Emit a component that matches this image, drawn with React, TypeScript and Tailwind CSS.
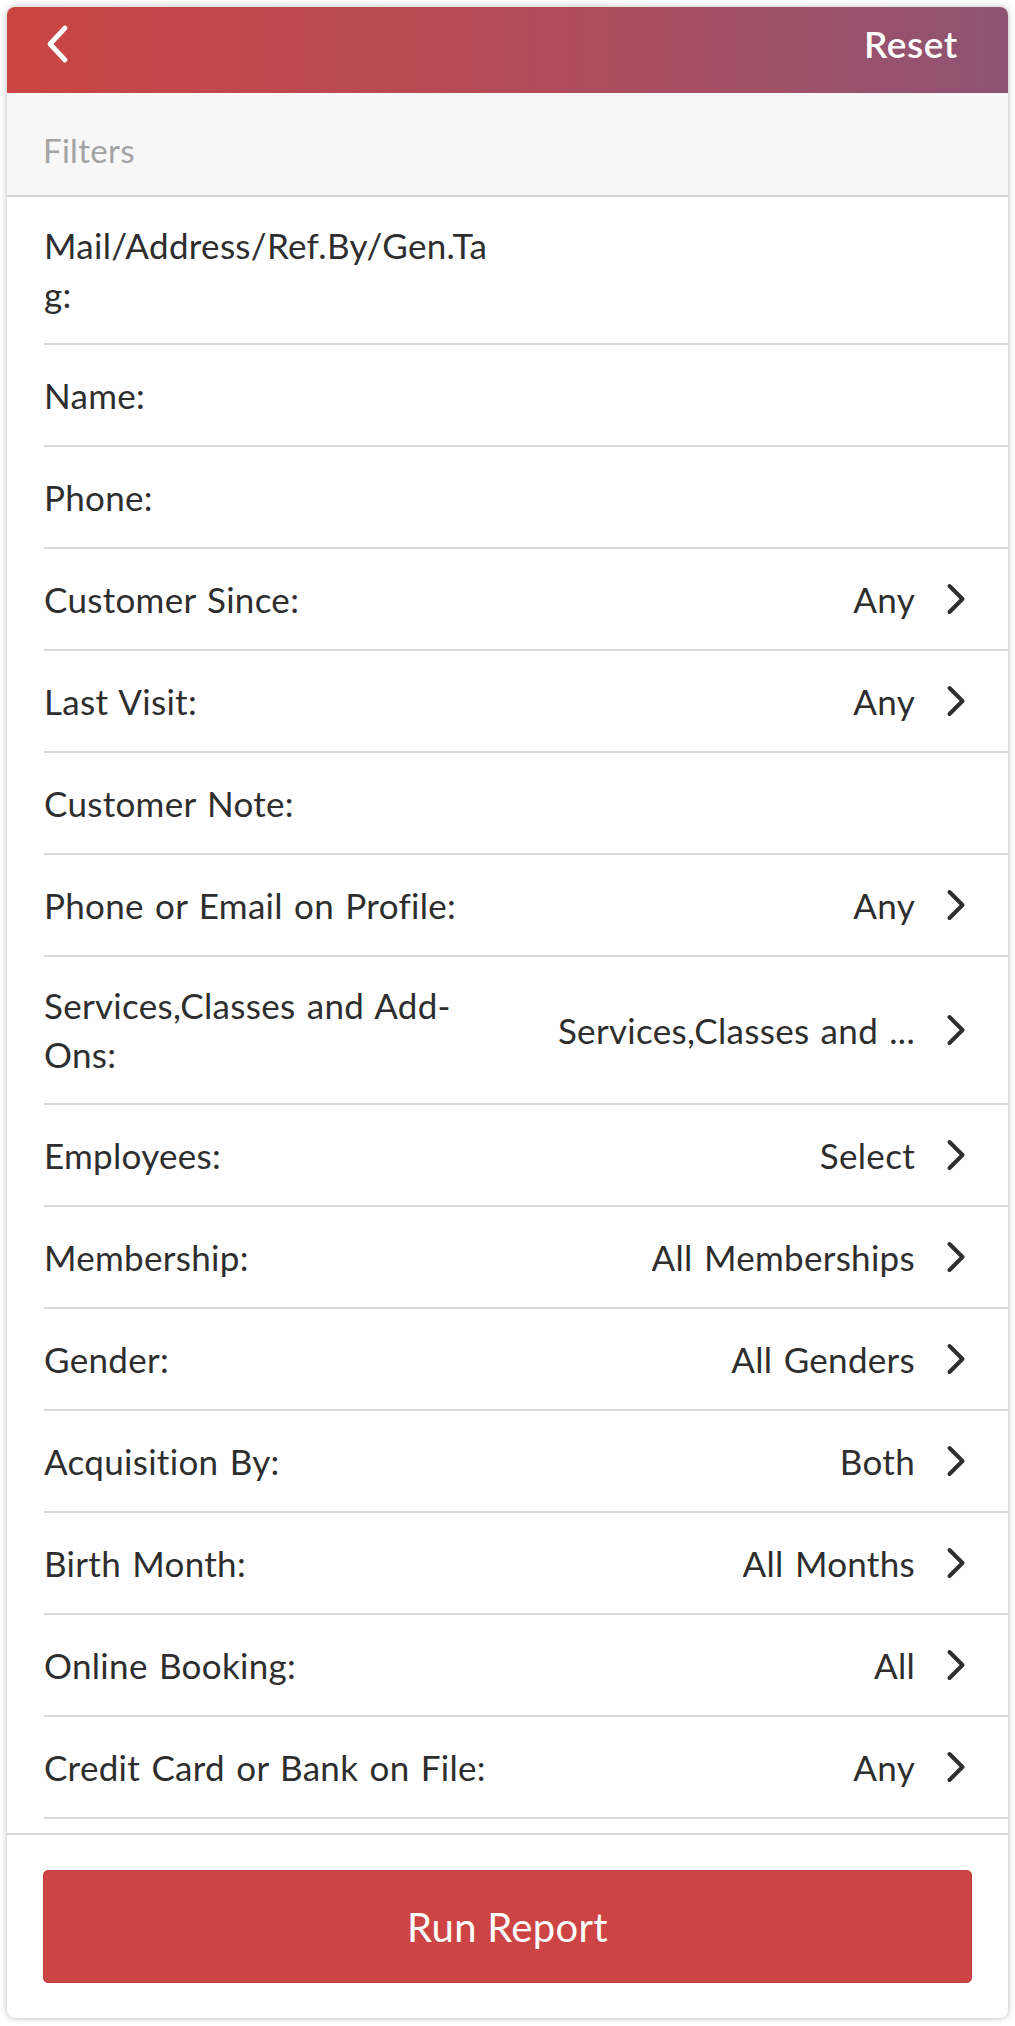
import { Fragment } from "react";

type FilterRow = {
  label: string;
  value?: string;
  tall?: boolean;
};

const ROWS: FilterRow[] = [
  { label: "Mail/Address/Ref.By/Gen.Ta\ng:", tall: true },
  { label: "Name:" },
  { label: "Phone:" },
  { label: "Customer Since:", value: "Any" },
  { label: "Last Visit:", value: "Any" },
  { label: "Customer Note:" },
  { label: "Phone or Email on Profile:", value: "Any" },
  { label: "Services,Classes and Add-\nOns:", value: "Services,Classes and ...", tall: true },
  { label: "Employees:", value: "Select" },
  { label: "Membership:", value: "All Memberships" },
  { label: "Gender:", value: "All Genders" },
  { label: "Acquisition By:", value: "Both" },
  { label: "Birth Month:", value: "All Months" },
  { label: "Online Booking:", value: "All" },
  { label: "Credit Card or Bank on File:", value: "Any" },
];

function Chevron() {
  return (
    <svg width="20" height="32" viewBox="0 0 20 32" fill="none" className="shrink-0">
      <polyline
        points="3.5,3 16.5,16 3.5,29"
        stroke="#2f2f2f"
        strokeWidth="4"
        strokeLinecap="round"
        strokeLinejoin="round"
      />
    </svg>
  );
}

function Row({ row }: { row: FilterRow }) {
  return (
    <div
      className={
        "ml-[37px] flex items-center border-b-2 border-[#d9d9d9] pr-[42px] " +
        (row.tall ? "h-[148px]" : "h-[102px]")
      }
    >
      <div className="w-[470px] shrink-0 leading-[49px]">
        {row.label.split("\n").map((line, i) => (
          <Fragment key={i}>
            {i > 0 && <br />}
            {line}
          </Fragment>
        ))}
      </div>
      {row.value && (
        <div className="flex min-w-0 flex-1 items-center justify-end gap-[31px]">
          <span className="truncate">{row.value}</span>
          <Chevron />
        </div>
      )}
    </div>
  );
}

export default function App() {
  return (
    <div
      className="bg-white p-[7px] text-[#2e2e2e]"
      style={{ fontFamily: "Lato, 'Liberation Sans', sans-serif" }}
    >
      <div className="flex h-[2011px] flex-col overflow-hidden rounded-[8px] bg-white shadow-[0_0_6px_rgba(0,0,0,0.28)]">
        {/* header */}
        <div className="flex h-[86px] shrink-0 items-center justify-between bg-gradient-to-r from-[#ca4541] via-[#b44b58] to-[#8e5373] pb-3 pl-[38px] pr-[50px] text-white">
          <svg width="26" height="40" viewBox="0 0 26 40" fill="none">
            <polyline
              points="20,4 5,20 20,36"
              stroke="#ffffff"
              strokeWidth="4.8"
              strokeLinecap="round"
              strokeLinejoin="round"
            />
          </svg>
          <span className="text-[37px] font-semibold tracking-[0.6px]">Reset</span>
        </div>

        <div className="flex h-[104px] shrink-0 items-center border-b-2 border-[#d3d3d3] bg-[#f7f7f7] pl-[36px] pt-[14px] text-[33px] tracking-[0.3px] text-[#a3a3a3]">
          Filters
        </div>

        {/* filter list */}
        <div className="min-h-0 flex-1 overflow-hidden text-[35px] tracking-[0.3px] [word-spacing:2px]">
          {ROWS.map((row) => (
            <Row key={row.label} row={row} />
          ))}
        </div>

        {/* footer */}
        <div className="shrink-0 border-t-2 border-[#d6d6d6] px-[36px] py-[35px]">
          <button className="flex h-[113px] w-full items-center justify-center rounded-[5px] border border-[#c03d3d] bg-[#cc4444] text-[40px] tracking-[0.3px] text-white">
            Run Report
          </button>
        </div>
      </div>
    </div>
  );
}
